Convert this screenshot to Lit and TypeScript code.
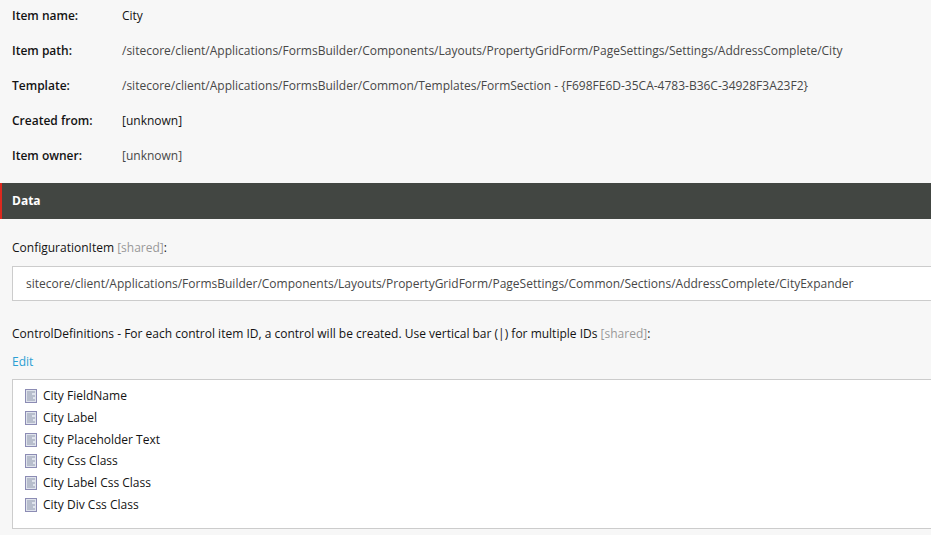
import { LitElement, html, css, svg } from "lit";
import { customElement } from "lit/decorators.js";

const meta: [string, string, boolean][] = [
  ["Item name:", "City", true],
  ["Item path:", "/sitecore/client/Applications/FormsBuilder/Components/Layouts/PropertyGridForm/PageSettings/Settings/AddressComplete/City", false],
  ["Template:", "/sitecore/client/Applications/FormsBuilder/Common/Templates/FormSection - {F698FE6D-35CA-4783-B36C-34928F3A23F2}", false],
  ["Created from:", "[unknown]", true],
  ["Item owner:", "[unknown]", false],
];
const items = ["City FieldName", "City Label", "City Placeholder Text", "City Css Class", "City Label Css Class", "City Div Css Class"];

const icon = svg`<svg width="12" height="14" viewBox="0 0 12 14">
  <rect x="0" y="0" width="12" height="14" fill="#8c8cb4"/>
  <rect x="1" y="1" width="10" height="12" fill="#dfe3ec"/>
  <path d="M2 3h8M2 5h5M2 7h8M2 9h6M2 11h8" stroke="#8f98ac" stroke-width="1" fill="none"/>
</svg>`;

@customElement("app-root")
export class AppRoot extends LitElement {
  static styles = css`
    :host { display: block; width: 931px; height: 535px; overflow: hidden; background: #f7f7f7; font-family: "Open Sans", sans-serif; font-size: 12px; color: #131313; line-height: 16px; }
    .meta { display: flex; flex-direction: column; gap: 19px; padding: 8px 0 0 12px; height: 183px; box-sizing: border-box; }
    .row { display: flex; white-space: nowrap; }
    .k { width: 110px; font-weight: 600; flex: none; }
    .v { color: #474747; }
    .v.dark { color: #131313; }
    .bar { height: 36px; background: #424642; border-left: 2px solid #dc291e; box-sizing: border-box; padding-left: 10px; display: flex; align-items: center; color: #fff; font-weight: 700; }
    .body { padding: 21px 0 0 12px; width: 1100px; box-sizing: border-box; }
    .sh { color: #999; }
    .input { margin-top: 10px; height: 35px; box-sizing: border-box; background: #fff; border: 1px solid #ccc; padding: 0 13px; display: flex; align-items: center; color: #474747; white-space: nowrap; }
    .lab2 { margin-top: 25px; white-space: nowrap; }
    .edit { margin-top: 12px; color: #2b9fd4; }
    .list { margin-top: 9px; height: 150px; box-sizing: border-box; background: #fff; border: 1px solid #ccc; padding: 8px 0 0 12px; display: flex; flex-direction: column; gap: 5.8px; }
    .it { display: flex; align-items: center; gap: 6px; height: 16px; white-space: nowrap; color: #131313; }
    .it svg { flex: none; }
  `;
  render() {
    return html`
      <div class="meta">
        ${meta.map(([k, v, d]) => html`<div class="row"><div class="k">${k}</div><div class="v ${d ? "dark" : ""}">${v}</div></div>`)}
      </div>
      <div class="bar">Data</div>
      <div class="body">
        <div class="lab1">ConfigurationItem <span class="sh">[shared]</span>:</div>
        <div class="input">sitecore/client/Applications/FormsBuilder/Components/Layouts/PropertyGridForm/PageSettings/Common/Sections/AddressComplete/CityExpander</div>
        <div class="lab2">ControlDefinitions - For each control item ID, a control will be created. Use vertical bar (|) for multiple IDs <span class="sh">[shared]</span>:</div>
        <div class="edit">Edit</div>
        <div class="list">
          ${items.map((t) => html`<div class="it">${icon}<span>${t}</span></div>`)}
        </div>
      </div>
    `;
  }
}
